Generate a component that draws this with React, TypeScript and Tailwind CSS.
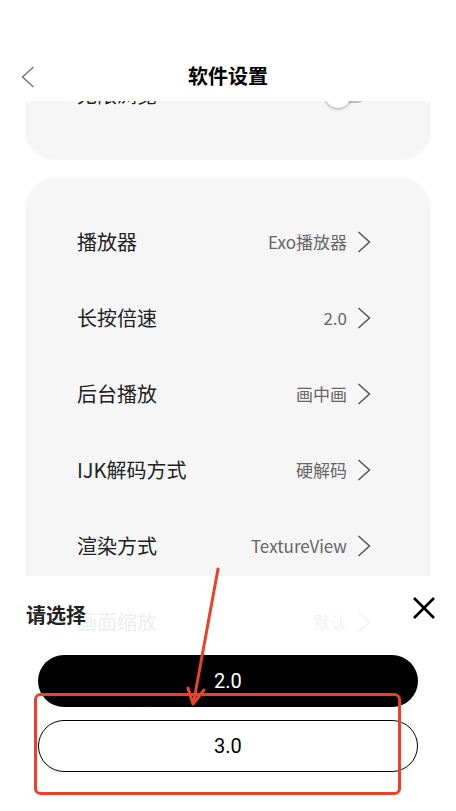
import React from "react";

const rows = [
  { label: "播放器", value: "Exo播放器" },
  { label: "长按倍速", value: "2.0" },
  { label: "后台播放", value: "画中画" },
  { label: "IJK解码方式", value: "硬解码" },
  { label: "渲染方式", value: "TextureView" },
  { label: "画面缩放", value: "默认" },
  { label: "清除缓存", value: "" },
];

const font = { fontFamily: '"Noto Sans CJK SC", "Noto Sans", sans-serif' };

function Chevron() {
  return (
    <svg width="14" height="22" viewBox="0 0 14 22" className="ml-[10px] shrink-0">
      <polyline points="1.5,1 12.5,11 1.5,21" fill="none" stroke="#555" strokeWidth="1.5" />
    </svg>
  );
}

export default function App() {
  return (
    <div className="relative h-[811px] w-[456px] overflow-hidden bg-white text-[#222]" style={font}>
      <header className="relative z-10 flex h-[101px] items-center bg-white pt-[50px]">
        <svg width="14" height="22" viewBox="0 0 14 22" className="absolute left-[21px] top-[66px]">
          <polyline points="12.5,1 1.5,11 12.5,21" fill="none" stroke="#777" strokeWidth="1.5" />
        </svg>
        <h1 className="w-full text-center text-[20px] font-bold text-black">软件设置</h1>
      </header>

      <main className="mt-[-70px] flex flex-col gap-[18px] px-[25px]">
        <section className="rounded-[30px] bg-[#f6f6f6] pb-[27px] pt-[26px]">
          <div className="flex h-[76px] items-center justify-between pl-[52px] pr-[66px]">
            <span className="text-[20px]">无限浏览</span>
            <div className="relative h-[26px] w-[40px]">
              <div className="absolute right-0 top-[5px] h-[16px] w-[34px] rounded-full bg-[#bdbdbd]" />
              <div className="absolute left-0 top-0 h-[26px] w-[26px] rounded-full bg-white shadow-[0_1px_3px_rgba(0,0,0,0.35)]" />
            </div>
          </div>
        </section>

        <section className="rounded-[30px] bg-[#f6f6f6] pb-[26px] pt-[26px]">
          {rows.map((r) => (
            <div key={r.label} className="flex h-[76px] items-center justify-between pl-[52px] pr-[60px]">
              <span className="text-[20px]">{r.label}</span>
              <div className="flex items-center">
                <span className="text-[17px] text-[#666]">{r.value}</span>
                <Chevron />
              </div>
            </div>
          ))}
        </section>
      </main>

      <div className="absolute inset-x-0 bottom-0 top-[576px] z-20 bg-white/[0.92]">
        <div className="flex items-center justify-between pl-[26px] pr-[20px] pt-[24px]">
          <span className="text-[20px] font-bold text-[#222]">请选择</span>
          <svg width="24" height="24" viewBox="0 0 24 24" className="mt-[-14px]">
            <path d="M2 2 L22 22 M22 2 L2 22" stroke="#000" strokeWidth="2.6" />
          </svg>
        </div>
        <div className="mt-[25px] flex flex-col gap-[13px] px-[38px]" style={{ fontFamily: "Roboto, sans-serif" }}>
          <button className="h-[52px] rounded-full bg-black text-[20px] text-white">2.0</button>
          <button className="h-[52px] rounded-full border border-black bg-white text-[20px] text-black">3.0</button>
        </div>
      </div>

      <svg className="pointer-events-none absolute inset-0 z-30" width="456" height="811" viewBox="0 0 456 811">
        <rect x="35.5" y="694.5" width="364" height="99" rx="5" fill="none" stroke="#ea4128" strokeWidth="3" />
        <line x1="218" y1="569" x2="194" y2="700" stroke="#ea4128" strokeWidth="3" strokeLinecap="round" />
        <polyline points="188,688 193,704 204,690" fill="none" stroke="#ea4128" strokeWidth="3" strokeLinecap="round" strokeLinejoin="round" />
      </svg>
    </div>
  );
}
